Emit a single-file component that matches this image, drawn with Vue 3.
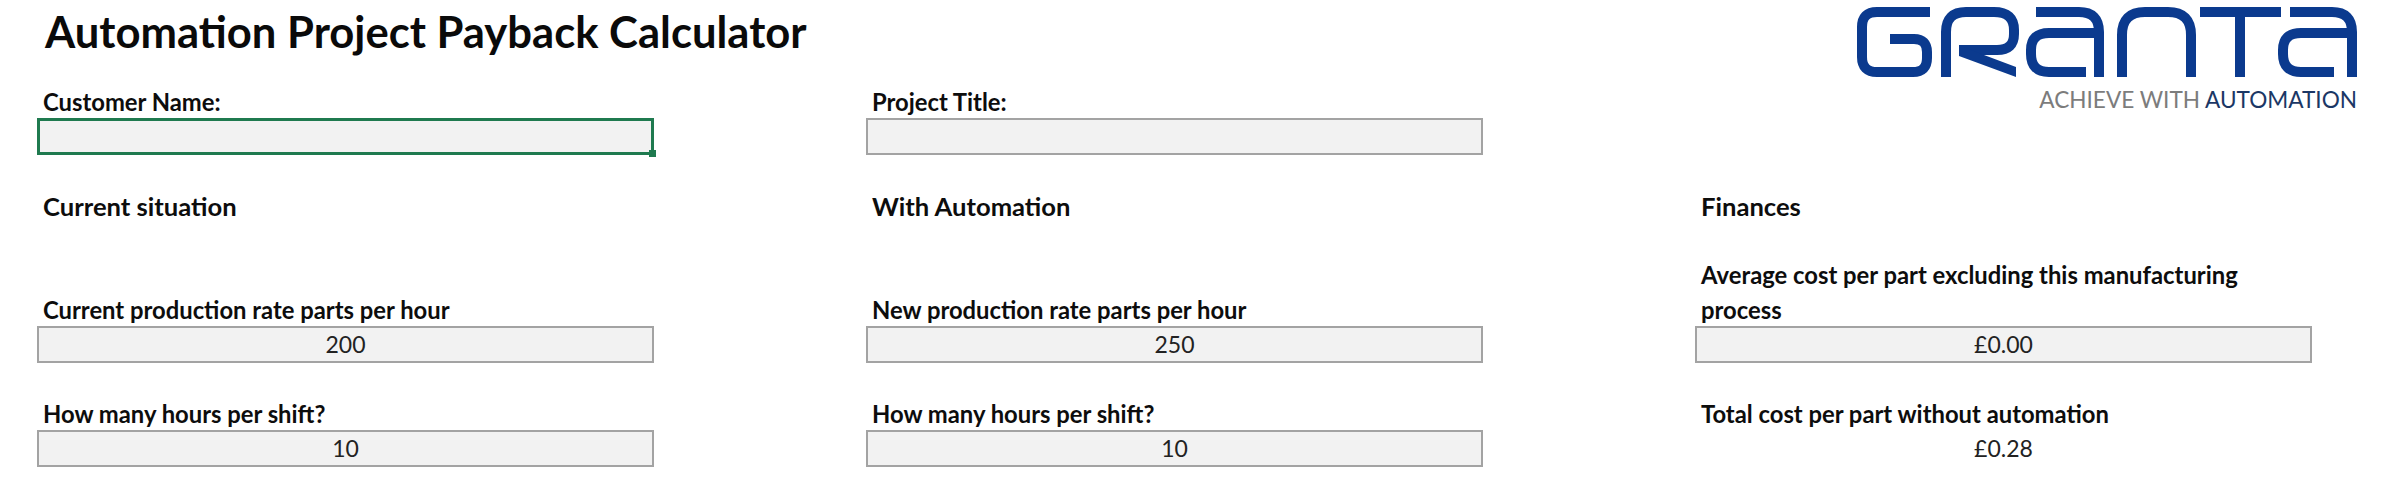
<template>
  <div class="sheet">
    <h1 class="title">Automation Project Payback Calculator</h1>

    <!-- logo -->
    <div class="logo">
      <svg class="logo-mark" width="515" height="85" viewBox="0 0 515 85" fill="none" stroke="#0b3a8e" stroke-width="10">
        <path d="M81 12 H28 Q13 12 13 27 V57 Q13 72 28 72 H64 Q78 72 78 58 V52 Q78 39 65 39 H41" />
        <path d="M97 77 V32 Q97 12 117 12 H145 Q165 12 165 30 V34 Q165 50 148 50 H110" />
        <polygon points="110,45 110,56 167,77 167,67 135,55" fill="#0b3a8e" stroke="none" />
        <path d="M187 12 H230 Q250 12 250 32 V77 M250 33 H200 Q182 33 182 50 V54 Q182 72 200 72 H237" />
        <path d="M273 77 V35 Q273 12 296 12 H319 Q342 12 342 35 V77" />
        <path d="M351 12 H432 M391 12 V77" />
        <path d="M441 12 H483 Q503 12 503 32 V77 M503 33 H452 Q434 33 434 50 V54 Q434 72 452 72 H485" />
      </svg>
      <div class="tagline">ACHIEVE WITH <span class="tagline-dark">AUTOMATION</span></div>
    </div>

    <div v-for="f in topFields" :key="f.label" class="field">
      <div class="label">{{ f.label }}</div>
      <div class="box" :class="{ selected: f.selected }">
        <span v-if="f.selected" class="handle"></span>
      </div>
    </div>

    <div v-for="h in headings" :key="h" class="heading">{{ h }}</div>

    <div v-for="f in fields" :key="f.id" class="field">
      <div class="label">{{ f.label }}</div>
      <div class="box" :class="{ plain: f.plain }">{{ f.value }}</div>
    </div>
  </div>
</template>

<script setup>
const topFields = [
  { label: 'Customer Name:', selected: true },
  { label: 'Project Title:' },
]

const headings = ['Current situation', 'With Automation', 'Finances']

const fields = [
  { id: 'rate', label: 'Current production rate parts per hour', value: '200' },
  { id: 'newRate', label: 'New production rate parts per hour', value: '250' },
  { id: 'avgCost', label: 'Average cost per part excluding this manufacturing process', value: '£0.00' },
  { id: 'hours', label: 'How many hours per shift?', value: '10' },
  { id: 'newHours', label: 'How many hours per shift?', value: '10' },
  { id: 'total', label: 'Total cost per part without automation', value: '£0.28', plain: true },
]
</script>

<style scoped>
.sheet {
  width: 2400px;
  height: 500px;
  box-sizing: border-box;
  padding-left: 37px;
  display: grid;
  grid-template-columns: repeat(3, 617px);
  grid-template-rows: 70px 85px 86px 122px 104px;
  column-gap: 212px;
  font-family: Lato, "Open Sans", sans-serif;
  color: #111;
  background: #fff;
  overflow: hidden;
}

.title {
  grid-column: 1 / span 2;
  margin: 0;
  padding: 0 0 6px 8px;
  align-self: center;
  font-size: 43.6px;
  font-weight: 700;
  line-height: 1;
  color: #0a0a0a;
}

.logo {
  grid-row: 1 / span 2;
  grid-column: 3;
  justify-self: end;
  margin-right: -52px;
  display: flex;
  flex-direction: column;
  align-items: flex-end;
}

.logo-mark {
  display: block;
  flex: none;
}

.tagline {
  margin-top: 2px;
  padding-right: 7px;
  font-size: 22.6px;
  line-height: 26px;
  color: #7c7c7c;
  white-space: pre;
}

.tagline-dark {
  color: #1b3765;
}

.field {
  align-self: end;
  display: flex;
  flex-direction: column;
}

.label {
  padding: 0 6px;
  margin-bottom: -2px;
  font-size: 23.8px;
  font-weight: 700;
  line-height: 35px;
  color: #0d0d0d;
}

.box {
  position: relative;
  box-sizing: border-box;
  height: 37px;
  border: 2px solid #a3a3a3;
  background: #f2f2f2;
  font-size: 23px;
  line-height: 33px;
  text-align: center;
  color: #222;
}

.box.plain {
  border-color: transparent;
  background: none;
}

.box.selected {
  border: 3px solid #1f7a4f;
}

/* excel fill handle on the active cell */
.handle {
  position: absolute;
  right: -5px;
  bottom: -5px;
  width: 7px;
  height: 7px;
  background: #1f7a4f;
}

.heading {
  align-self: center;
  margin-top: 16px;
  padding-left: 6px;
  font-size: 25.6px;
  font-weight: 700;
  line-height: 32px;
  color: #0d0d0d;
}
</style>
